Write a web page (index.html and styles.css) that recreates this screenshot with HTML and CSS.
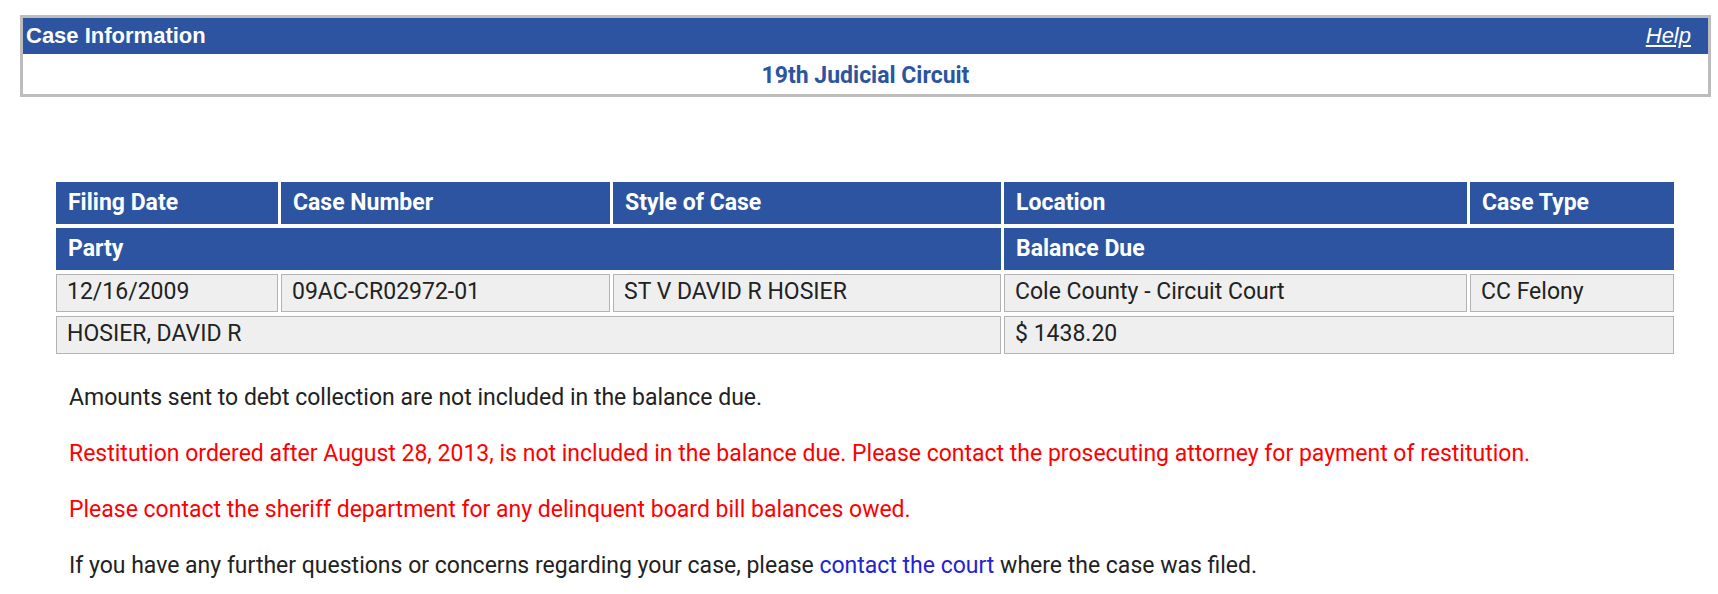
FILE: index.html
```html
<!DOCTYPE html>
<html lang="en">
<head>
<meta charset="utf-8">
<title>Case Information</title>
<link rel="stylesheet" href="styles.css">
</head>
<body>
<div class="case-box">
  <div class="case-bar">
    <span class="case-title">Case Information</span>
    <a class="help" href="#">Help</a>
  </div>
  <div class="circuit">19th Judicial Circuit</div>
</div>

<div class="case-grid">
  <div class="hcell">Filing Date</div>
  <div class="hcell">Case Number</div>
  <div class="hcell">Style of Case</div>
  <div class="hcell">Location</div>
  <div class="hcell">Case Type</div>

  <div class="hcell span3">Party</div>
  <div class="hcell span2">Balance Due</div>

  <div class="dcell">12/16/2009</div>
  <div class="dcell">09AC-CR02972-01</div>
  <div class="dcell">ST V DAVID R HOSIER</div>
  <div class="dcell">Cole County - Circuit Court</div>
  <div class="dcell">CC Felony</div>

  <div class="dcell span3">HOSIER, DAVID R</div>
  <div class="dcell span2">$ 1438.20</div>
</div>

<div class="notes">
  <p class="note">Amounts sent to debt collection are not included in the balance due.</p>
  <p class="note warn">Restitution ordered after August 28, 2013, is not included in the balance due. Please contact the prosecuting attorney for payment of restitution.</p>
  <p class="note warn">Please contact the sheriff department for any delinquent board bill balances owed.</p>
  <p class="note">If you have any further questions or concerns regarding your case, please <a class="court-link" href="#">contact the court</a> where the case was filed.</p>
</div>
</body>
</html>
```

FILE: styles.css
```css
html, body {
  margin: 0;
  padding: 0;
  background: #ffffff;
}

body {
  font-family: Roboto, "Liberation Sans", Arial, sans-serif;
  color: #222222;
}

.case-box {
  box-sizing: border-box;
  width: 1691px;
  margin: 15px 0 0 20px;
  border: 3px solid #bdbdbd;
}

.case-bar {
  height: 36px;
  display: flex;
  align-items: center;
  justify-content: space-between;
  padding: 0 17px 0 3px;
  background: #2c54a0;
  color: #ffffff;
  font-family: "Liberation Sans", Arial, sans-serif;
  font-size: 22px;
}

.case-title {
  font-weight: bold;
}

.help {
  color: #ffffff;
  font-style: italic;
  text-decoration: underline;
}

.circuit {
  box-sizing: border-box;
  height: 40px;
  padding-top: 3px;
  display: flex;
  align-items: center;
  justify-content: center;
  font-family: Roboto, "Liberation Sans", Arial, sans-serif;
  font-weight: bold;
  font-size: 23px;
  color: #2c54a0;
}

.case-grid {
  display: grid;
  grid-template-columns: 222px 329px 388px 463px 204px;
  column-gap: 3px;
  row-gap: 4px;
  margin: 85px 0 0 56px;
  width: 1618px;
}

.hcell {
  box-sizing: border-box;
  height: 42px;
  display: flex;
  align-items: center;
  padding: 0 10px 1px 12px;
  background: #2c54a0;
  color: #ffffff;
  font-weight: bold;
  font-size: 23px;
}

.dcell {
  box-sizing: border-box;
  height: 38px;
  display: flex;
  align-items: center;
  padding: 0 10px 3px 10px;
  background: #efefef;
  border: 1px solid #b3b3b3;
  color: #222222;
  font-size: 23px;
}

.span3 {
  grid-column: span 3;
}

.span2 {
  grid-column: span 2;
}

.notes {
  display: flex;
  flex-direction: column;
  gap: 29px;
  margin: 30px 0 0 69px;
}

.note {
  margin: 0;
  font-size: 23px;
  line-height: 27px;
  color: #222222;
}

.warn {
  color: #ff0000;
}

.court-link {
  color: #2323d2;
  text-decoration: none;
}
```
